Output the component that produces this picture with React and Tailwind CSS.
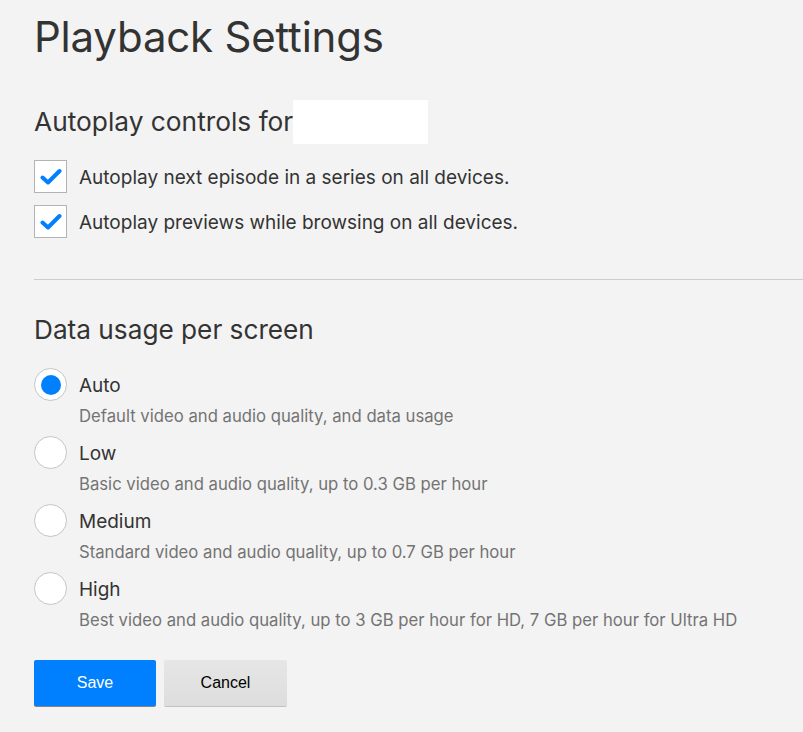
import React from "react";

const options = [
  { label: "Auto", desc: "Default video and audio quality, and data usage", checked: true },
  { label: "Low", desc: "Basic video and audio quality, up to 0.3 GB per hour" },
  { label: "Medium", desc: "Standard video and audio quality, up to 0.7 GB per hour" },
  { label: "High", desc: "Best video and audio quality, up to 3 GB per hour for HD, 7 GB per hour for Ultra HD" },
];

function CheckBox() {
  return (
    <span className="flex h-[33px] w-[33px] shrink-0 items-center justify-center border border-[#b3b3b3] bg-white">
      <svg width="22" height="18" viewBox="0 0 22 18" fill="none">
        <path d="M2.5 9.5 L8 14.5 L19.5 3" stroke="#0080ff" strokeWidth="4" strokeLinecap="round" strokeLinejoin="round" />
      </svg>
    </span>
  );
}

function Radio({ checked }) {
  return (
    <span className="flex h-[33px] w-[33px] shrink-0 items-center justify-center rounded-full border border-[#c4c4c4] bg-white">
      {checked && <span className="h-[20px] w-[20px] rounded-full bg-[#0080ff]" />}
    </span>
  );
}

export default function App() {
  return (
    <div className="min-h-[732px] w-full overflow-hidden bg-[#f3f3f3] pl-[34px] text-[#333] [font-family:Inter,'Noto_Sans',sans-serif]">
      <h1 className="pt-[12px] text-[42px] leading-[50px] font-normal tracking-[-0.2px]">Playback Settings</h1>

      <div className="mt-[38px] flex items-center">
        <h2 className="text-[26.3px] leading-[44px] font-normal">Autoplay controls for</h2>
        <span className="h-[44px] w-[135px] bg-white" />
      </div>

      <div className="mt-[16px] flex flex-col gap-[12px]">
        <label className="flex items-center gap-[12px]">
          <CheckBox />
          <span className="pt-[3px] text-[19px]">Autoplay next episode in a series on all devices.</span>
        </label>
        <label className="flex items-center gap-[12px]">
          <CheckBox />
          <span className="pt-[3px] text-[19px]">Autoplay previews while browsing on all devices.</span>
        </label>
      </div>

      <div className="mt-[41px] h-px bg-[#cccccc]" />

      <h2 className="mt-[34px] text-[26.2px] leading-[32px] font-normal">Data usage per screen</h2>

      <div className="mt-[22px] flex flex-col">
        {options.map((o) => (
          <div key={o.label} className="h-[68px]">
            <div className="flex items-center gap-[12px]">
              <Radio checked={o.checked} />
              <span className="pt-[3px] text-[19px]">{o.label}</span>
            </div>
            <div className="mt-[4px] pl-[45px] text-[16.7px] leading-[22px] text-[#737373]">{o.desc}</div>
          </div>
        ))}
      </div>

      <div className="mt-[20px] flex gap-[8px]">
        <button className="h-[46px] w-[122px] rounded-[2px] bg-[#0080ff] text-[16px] text-white shadow-[0_1px_0_rgba(0,0,0,0.45)] [font-family:'Liberation_Sans',Arial,sans-serif]">
          Save
        </button>
        <button className="h-[46px] w-[123px] rounded-[2px] bg-gradient-to-b from-[#e6e6e6] to-[#dddddd] text-[16px] text-black shadow-[0_1px_0_rgba(0,0,0,0.2)] [font-family:'Liberation_Sans',Arial,sans-serif]">
          Cancel
        </button>
      </div>
    </div>
  );
}
